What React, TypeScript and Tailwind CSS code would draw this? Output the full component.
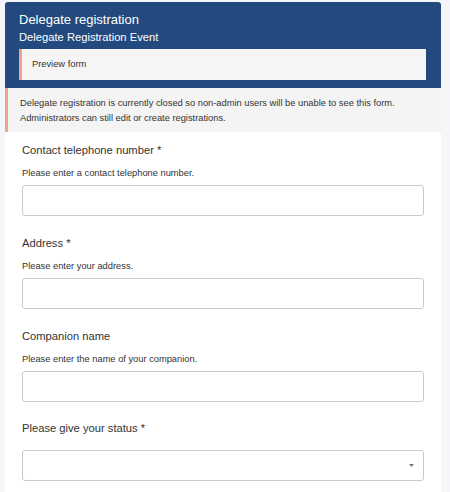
import React from 'react';

const fields = [
    { label: 'Contact telephone number *', help: 'Please enter a contact telephone number.' },
    { label: 'Address *', help: 'Please enter your address.' },
    { label: 'Companion name', help: 'Please enter the name of your companion.' },
];

const App: React.FC = () => {
    return (
        <div className="min-h-[492px] bg-[#f5f6fa] pt-[2px] pl-[5px] pr-[9px] font-['Liberation_Sans',Arial,sans-serif]">
            <div className="bg-white rounded-t-[3px] overflow-hidden h-[490px]">
                {/* Header */}
                <div className="bg-[#224a7f] pl-[14px] pr-[15px] pt-[10px] pb-[8px]">
                    <h1 className="text-white text-[13px] leading-[16px]">Delegate registration</h1>
                    <h2 className="text-white text-[11.2px] leading-[14px] mt-[2px]">Delegate Registration Event</h2>
                    <div className="mt-[5px] bg-[#f5f5f5] border-l-[3px] border-[#f4a38b] h-[31px] flex items-center pl-[10px]">
                        <span className="text-[9.3px] text-[#333]">Preview form</span>
                    </div>
                </div>

                {/* Notice */}
                <div className="bg-[#f4f4f4] border-l-[3px] border-[#f4a38b] pl-[12px] pr-[10px] pt-[8px] h-[44px]">
                    <p className="text-[9.3px] leading-[15px] text-[#333]">
                        Delegate registration is currently closed so non-admin users will be unable to see this form.
                        <br />
                        Administrators can still edit or create registrations.
                    </p>
                </div>

                {/* Form */}
                <div className="px-[17px] pt-[11px]">
                    {fields.map((f) => (
                        <div key={f.label} className="mb-[20px]">
                            <label className="block text-[11.2px] leading-[14px] text-[#333]">{f.label}</label>
                            <p className="text-[9.3px] leading-[12px] text-[#333] mt-[10px]">{f.help}</p>
                            <input
                                type="text"
                                className="block w-full h-[31px] mt-[6px] border border-[#cacaca] rounded-[3px] bg-white outline-none"
                            />
                        </div>
                    ))}
                    <div className="-mt-[1px]">
                        <label className="block text-[11.2px] leading-[14px] text-[#333]">Please give your status *</label>
                        <div className="relative mt-[15px]">
                            <div className="h-[31px] w-full border border-[#cacaca] rounded-[3px] bg-white" />
                            <svg className="absolute right-[10px] top-[14px]" width="5" height="3" viewBox="0 0 5 3">
                                <path d="M0 0 L5 0 L2.5 3 Z" fill="#777" />
                            </svg>
                        </div>
                    </div>
                </div>
            </div>
        </div>
    );
};

export default App;
